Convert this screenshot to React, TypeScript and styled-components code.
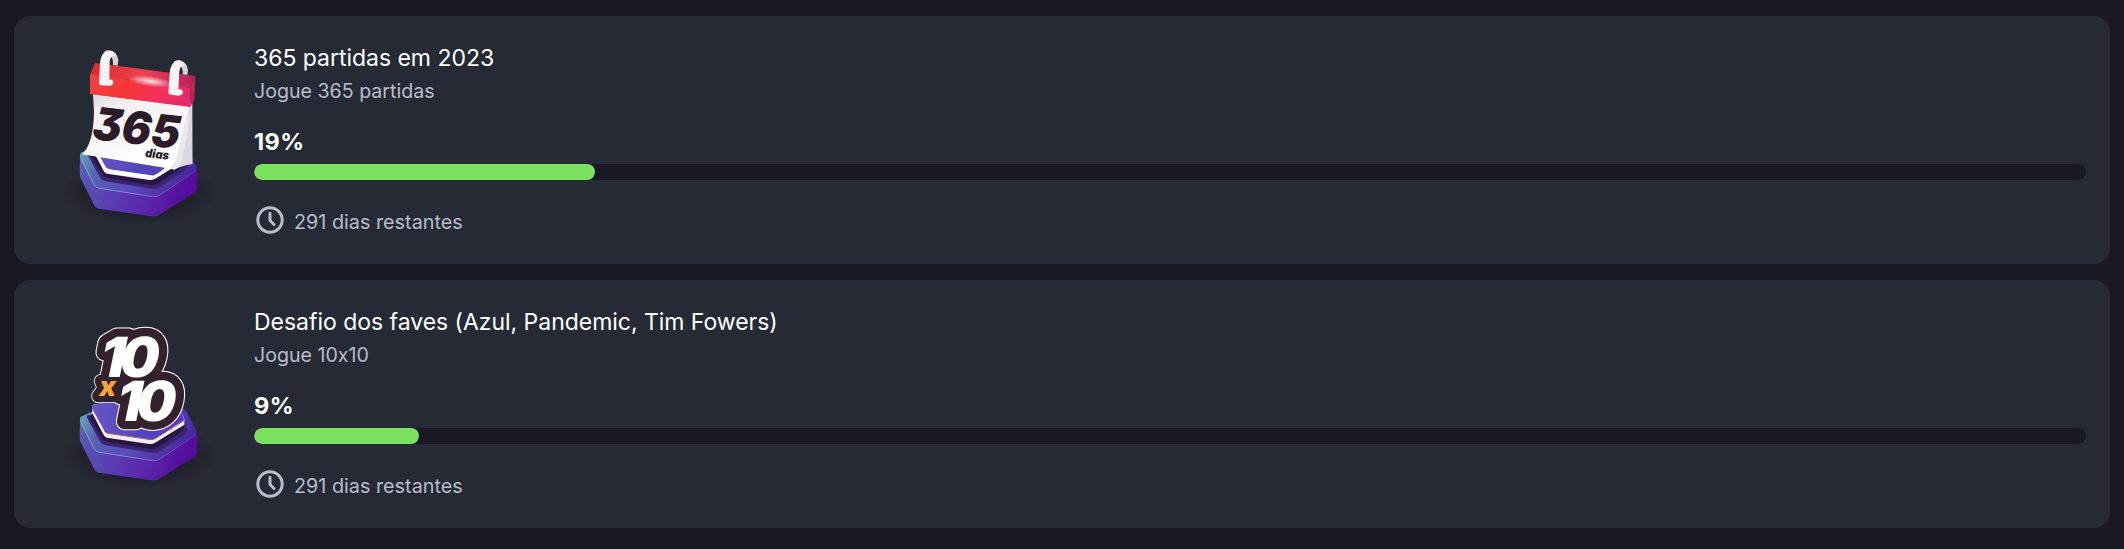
import React from 'react';
import styled, { createGlobalStyle } from 'styled-components';

interface Challenge {
    id: number;
    title: string;
    description: string;
    done: number;
    total: number;
    daysLeft: number;
    badge: React.FC;
}

const Pedestal: React.FC<{ id: string }> = ({ id }) => (
    <g>
        <defs>
            <linearGradient id={`${id}-side`} x1="0" x2="1" y1="0" y2="0.15">
                <stop offset="0" stopColor="#5a6fae" />
                <stop offset="0.14" stopColor="#5a50b4" />
                <stop offset="0.6" stopColor="#5a2cb0" />
                <stop offset="1" stopColor="#560c9c" />
            </linearGradient>
            <linearGradient id={`${id}-top`} x1="0" x2="1" y1="0.2" y2="0.5">
                <stop offset="0" stopColor="#6aa5b8" />
                <stop offset="0.22" stopColor="#5663b4" />
                <stop offset="0.6" stopColor="#5a48bd" />
                <stop offset="1" stopColor="#47269a" />
            </linearGradient>
            <linearGradient id={`${id}-plate`} x1="0" x2="1" y1="0" y2="0">
                <stop offset="0" stopColor="#6a55c4" />
                <stop offset="0.5" stopColor="#5147bd" />
                <stop offset="1" stopColor="#5a35c4" />
            </linearGradient>
            <linearGradient id={`${id}-edge`} x1="0" x2="1" y1="0" y2="0">
                <stop offset="0" stopColor="#8fc4cf" />
                <stop offset="0.45" stopColor="#a392e0" />
                <stop offset="1" stopColor="#6a35bb" />
            </linearGradient>
            <radialGradient id={`${id}-shadow`}>
                <stop offset="0.5" stopColor="#15151d" stopOpacity="0.6" />
                <stop offset="1" stopColor="#15151d" stopOpacity="0" />
            </radialGradient>
        </defs>
        <ellipse cx="240" cy="470" rx="232" ry="100" fill={`url(#${id}-shadow)`} />
        <path d="M60 362Q60 352 70 350L140 318L365 328Q378 332 384 346L411 402V462Q411 470 402 475L296 540Q286 546 274 544L116 521Q106 519 101 508L62 430Q59 424 59 416Z" fill={`url(#${id}-side)`} />
        <path d="M60 362Q60 352 70 350L140 318L365 328Q378 332 384 346L411 398Q411 405 404 410L299 481Q290 488 278 486L118 461Q106 458 101 449L62 372Q60 368 60 362Z" fill={`url(#${id}-top)`} />
        <path d="M64 374L101 447Q106 457 118 460L278 485Q290 487 299 480L408 407" fill="none" stroke={`url(#${id}-edge)`} strokeWidth="2.5" opacity="0.85" />
        <path d="M80 350L126 338L356 340L383 392Q384 400 376 405L296 458Q286 464 274 461L137 439Q126 437 121 428L83 360Z" fill="#38246f" />
        <path d="M90 350L126 338L356 340L372 386Q372 392 366 397L292 446Q282 452 270 449L140 428Q130 426 126 417L92 360Z" fill="#291544" />
        <path d="M97 322Q98 316 108 315L160 310L360 330L373 360V377L284 432Q277 436 268 435L141 416Q134 414 131 408L97 343Z" fill="#f3edf3" />
        <path d="M97 322Q98 316 108 315L160 310L360 330L373 362L287 418Q280 422 270 421L144 403Q137 402 133 395L97 330Z" fill={`url(#${id}-plate)`} />
        <path d="M133 396Q137 402 144 403L270 422Q280 423 287 418L372 365" fill="none" stroke="#9c4a42" strokeWidth="2.5" />
    </g>
);

const CalendarBadge: React.FC = () => (
    <BadgeArt viewBox="0 0 480 570" aria-hidden="true">
        <defs>
            <linearGradient id="cal-header" x1="0" x2="1" y1="0.2" y2="0.5">
                <stop offset="0" stopColor="#f04040" />
                <stop offset="0.4" stopColor="#f63537" />
                <stop offset="0.75" stopColor="#f0325d" />
                <stop offset="1" stopColor="#e32c68" />
            </linearGradient>
            <linearGradient id="cal-lid" x1="0" x2="1" y1="0" y2="0">
                <stop offset="0" stopColor="#d92b2c" />
                <stop offset="0.5" stopColor="#ee4052" />
                <stop offset="1" stopColor="#b8215a" />
            </linearGradient>
            <linearGradient id="cal-paper" x1="0" x2="0.4" y1="0" y2="1">
                <stop offset="0" stopColor="#d9d4dc" />
                <stop offset="0.25" stopColor="#f2eff3" />
                <stop offset="1" stopColor="#ffffff" />
            </linearGradient>
            <linearGradient id="cal-back" x1="0" x2="1" y1="0" y2="0">
                <stop offset="0" stopColor="#ffffff" />
                <stop offset="1" stopColor="#c6bfcc" />
            </linearGradient>
            <radialGradient id="cal-shine">
                <stop offset="0" stopColor="#fff" stopOpacity="0.85" />
                <stop offset="1" stopColor="#fff" stopOpacity="0" />
            </radialGradient>
        </defs>
        <Pedestal id="cal" />
        <path d="M112 361L133 404Q138 412 146 414L268 432Q280 434 288 429L334 400L318 396L300 412Q293 418 282 422L148 403Q140 402 134 391L119 363Z" fill="#fff" />
        <path d="M365 208L396 202L397 388Q366 392 343 404L318 398Z" fill="url(#cal-back)" />
        <path d="M390 206Q380 320 358 388L397 386V205Z" fill="#ddd7e1" />
        <path d="M99 177L387 213Q386 300 364 375Q355 398 336 402L66 358Q101 325 102 230Z" fill="url(#cal-paper)" />
        <path d="M387 213Q386 300 364 375Q355 398 328 402Q352 380 358 330Z" fill="#ebe7ed" />
        <path d="M90 119L105 84L406 123L391 159Z" fill="url(#cal-lid)" />
        <path d="M90 118L391 158V216L90 177Z" fill="url(#cal-header)" />
        <path d="M391 158L406 123L403 192L391 216Z" fill="#c32561" />
        <ellipse cx="272" cy="139" rx="68" ry="16" transform="rotate(8 272 139)" fill="url(#cal-shine)" />
        <path d="M133 48L148 46Q172 49 175 76L173 92L159 90Q161 65 145 61Z" fill="#d6d2d8" />
        <path d="M117 146L120 88Q122 49 146 47Q164 48 166 62Q151 60 149 80L148 134Q158 132 160 143Q158 152 148 152L123 151Q117 150 117 146Z" fill="#f4f2f5" />
        <path d="M342 78L357 76Q381 79 384 106L382 120L368 118Q370 93 354 89Z" fill="#d6d2d8" />
        <path d="M325 174L329 118Q331 79 354 76Q373 77 375 92Q360 90 358 110L355 163Q367 161 369 172Q367 182 356 182L332 179Q325 178 325 174Z" fill="#f4f2f5" />
        <BadgeText transform="matrix(1 .115 -.12 1 94 312)" fill="#2c1c2a" fontSize="135" textLength="261" lengthAdjust="spacingAndGlyphs">365</BadgeText>
        <BadgeText transform="matrix(1 .11 -.08 1 255 366)" fill="#2c1c2a" fontSize="36" textLength="71" lengthAdjust="spacingAndGlyphs">dias</BadgeText>
    </BadgeArt>
);

const TenLabels: React.FC<{ fill: string; accent: string; outline?: number }> = ({ fill, accent, outline = 0 }) => (
    <g stroke={outline ? fill : 'none'} strokeWidth={outline} strokeLinejoin="round">
        <BadgeText transform="matrix(1 0 -.04 1 119 233)" fill={fill} fontSize="166" x="0 59">10</BadgeText>
        <BadgeText transform="matrix(1 0 -.04 1 169 365)" fill={fill} fontSize="166" x="0 59">10</BadgeText>
        <BadgeText transform="translate(118 291)" fill={accent} fontSize="82" strokeWidth={outline * 0.76}>x</BadgeText>
    </g>
);

// the dark sticker shape is the lettering itself, stroked twice behind the fill
const TenByTenBadge: React.FC = () => (
    <BadgeArt viewBox="0 0 480 570" aria-hidden="true">
        <Pedestal id="ten" />
        <TenLabels fill="#ffffff" accent="#ffffff" outline={56} />
        <TenLabels fill="#33222d" accent="#33222d" outline={50} />
        <TenLabels fill="#ffffff" accent="#f6a43a" />
    </BadgeArt>
);

const ClockIcon: React.FC = () => (
    <Clock viewBox="0 0 32 32" aria-hidden="true">
        <circle cx="16" cy="16" r="12.2" />
        <path d="M16 9.2V16.5L20 20.5" />
    </Clock>
);

const challenges: Challenge[] = [
    {
        id: 1,
        title: '365 partidas em 2023',
        description: 'Jogue 365 partidas',
        done: 68,
        total: 365,
        daysLeft: 291,
        badge: CalendarBadge,
    },
    {
        id: 2,
        title: 'Desafio dos faves (Azul, Pandemic, Tim Fowers)',
        description: 'Jogue 10x10',
        done: 9,
        total: 100,
        daysLeft: 291,
        badge: TenByTenBadge,
    },
];

const ChallengeCard: React.FC<{ challenge: Challenge }> = ({ challenge }) => {
    const { title, description, done, total, daysLeft, badge: Badge } = challenge;
    const percent = (done / total) * 100;

    return (
        <Card>
            <BadgeBlock>
                <Badge />
            </BadgeBlock>
            <Content>
                <Title>{title}</Title>
                <Description>{description}</Description>
                <Percent>{Math.round(percent)}%</Percent>
                <Track>
                    <Fill style={{ width: `${percent}%` }} />
                </Track>
                <Remaining>
                    <ClockIcon />
                    <span>{daysLeft} dias restantes</span>
                </Remaining>
            </Content>
        </Card>
    );
}

const App: React.FC = () => (
    <>
        <GlobalStyle />
        <List>
            {challenges.map(challenge => (
                <ChallengeCard key={challenge.id} challenge={challenge} />
            ))}
        </List>
    </>
);

const GlobalStyle = createGlobalStyle`
    * {
        box-sizing: border-box;
    }

    body {
        margin: 0;
        background: #191924;
        font-family: Inter, 'Liberation Sans', sans-serif;
    }
`

const List = styled.main`
    min-height: 549px;
    padding: 16px 14px 21px;
    display: flex;
    flex-direction: column;
    gap: 16px;
`

const Card = styled.article`
    height: 248px;
    padding-right: 24px;
    display: flex;
    border-radius: 16px;
    background: #262a35;
`

const BadgeBlock = styled.div`
    flex: 0 0 240px;
    padding: 19px 0 0 46px;
`

const BadgeArt = styled.svg`
    display: block;
    width: 160px;
    height: 190px;
`

const BadgeText = styled.text`
    font-family: Inter, 'Open Sans', sans-serif;
    font-weight: 900;
    font-style: italic;
    font-feature-settings: 'cv09';
`

const Content = styled.div`
    flex: 1;
    padding-top: 26px;
`

const Title = styled.h2`
    margin: 0;
    font-size: 23px;
    font-weight: 420;
    line-height: 32px;
    letter-spacing: -0.03px;
    color: #fff;
`

const Description = styled.p`
    margin: 1px 0 0;
    font-size: 19.6px;
    line-height: 32px;
    font-feature-settings: 'calt' 0;
    color: #b9bdcb;
`

const Percent = styled.strong`
    display: block;
    margin-top: 19px;
    font-size: 23.5px;
    font-weight: 700;
    line-height: 32px;
    letter-spacing: 0.4px;
    color: #fff;
`

const Track = styled.div`
    height: 16px;
    margin-top: 6px;
    overflow: hidden;
    border-radius: 8px;
    background: #191924;
`

const Fill = styled.div`
    height: 100%;
    border-radius: 8px;
    background: #7be05f;
`

const Remaining = styled.div`
    height: 32px;
    margin-top: 24px;
    display: flex;
    align-items: center;
    gap: 8px;
    font-size: 19.8px;
    color: #b9bdcb;

    span {
        margin-top: 4px;
    }
`

const Clock = styled.svg`
    width: 32px;
    height: 32px;
    fill: none;
    stroke: #b9bdcb;
    stroke-width: 3;
    stroke-linecap: round;
    stroke-linejoin: round;
`

export default App;
